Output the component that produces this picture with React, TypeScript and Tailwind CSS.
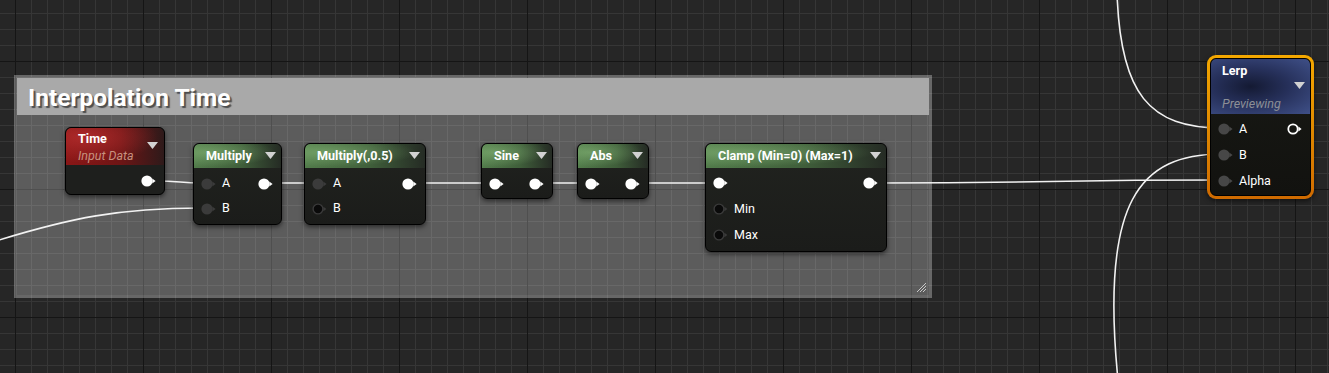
import type { ReactNode } from 'react'

type PinKind = 'out' | 'in' | 'inLight' | 'hollow' | 'ring'

function Pin({ kind }: { kind: PinKind }) {
  if (kind === 'out') {
    return (
      <svg width="15" height="12" viewBox="0 0 15 12" className="shrink-0">
        <circle cx="6" cy="6" r="5.6" fill="#ffffff" />
        <polygon points="11.3,3.6 14.6,6 11.3,8.4" fill="#ffffff" />
      </svg>
    )
  }
  if (kind === 'ring') {
    return (
      <svg width="15" height="12" viewBox="0 0 15 12" className="shrink-0">
        <circle cx="6" cy="6" r="4.7" fill="none" stroke="#ffffff" strokeWidth="1.8" />
        <polygon points="11.4,3.6 14.6,6 11.4,8.4" fill="#ffffff" />
      </svg>
    )
  }
  if (kind === 'hollow') {
    return (
      <svg width="15" height="12" viewBox="0 0 15 12" className="shrink-0">
        <circle cx="6" cy="6" r="4.9" fill="#0a0a0a" stroke="#3a3a3a" strokeWidth="1.4" />
        <polygon points="11.4,3.8 14.4,6 11.4,8.2" fill="#3a3a3a" />
      </svg>
    )
  }
  const c = kind === 'inLight' ? '#474747' : '#3b3b3b'
  return (
    <svg width="15" height="12" viewBox="0 0 15 12" className="shrink-0">
      <circle cx="6" cy="6" r="5.6" fill={c} />
      <polygon points="11.3,3.6 14.6,6 11.3,8.4" fill={c} />
    </svg>
  )
}

function Arrow() {
  return (
    <svg width="11" height="8" viewBox="0 0 11 8" className="shrink-0">
      <polygon points="0,0 11,0 5.5,7" fill="#d2d2d2" />
    </svg>
  )
}

function InRow({ kind, label, h }: { kind: PinKind; label: string; h: string }) {
  return (
    <div className={`flex items-center pl-[7px] ${h}`}>
      <Pin kind={kind} />
      <span className="ml-[6px] text-[12.5px] text-white">{label}</span>
    </div>
  )
}

const greenHead =
  'bg-[radial-gradient(ellipse_at_18%_35%,rgba(140,190,125,0.55),transparent_65%),linear-gradient(to_right,#527c4b,#3f5e3a_55%,#252b24)]'

function GreenNode({ cls, title, children }: { cls: string; title: string; children: ReactNode }) {
  return (
    <div
      className={`absolute rounded-[6px] border border-black bg-[linear-gradient(to_bottom,#21231f,#1b1c1a)] shadow-[0_2px_5px_rgba(0,0,0,0.55)] overflow-hidden ${cls}`}
    >
      <div className={`flex h-[24px] items-center justify-between pl-[12px] pr-[5px] rounded-t-[5px] ${greenHead}`}>
        <span className="text-[12.6px] font-bold text-white whitespace-nowrap">{title}</span>
        <Arrow />
      </div>
      {children}
    </div>
  )
}

export default function App() {
  return (
    <div className="relative h-[373px] w-[1329px] overflow-hidden font-[Roboto,sans-serif] bg-[#262626] bg-[linear-gradient(to_right,#151515_1px,transparent_1px),linear-gradient(to_bottom,#151515_1px,transparent_1px),linear-gradient(to_right,#363636_1px,transparent_1px),linear-gradient(to_bottom,#363636_1px,transparent_1px)] bg-[size:128px_128px,128px_128px,16px_16px,16px_16px] bg-[position:15px_61px,15px_61px,15px_13px,15px_13px]">
      {/* comment box */}
      <div className="absolute left-[14px] top-[75px] h-[223px] w-[918px] border-[3px] border-white/[0.07] bg-white/25">
        <div className="flex h-[37px] items-center bg-[#a9a9a9] pl-[11px] pt-[3px]">
          <span className="text-[24.5px] font-bold text-white [text-shadow:2px_2px_1px_rgba(0,0,0,0.55)]">
            Interpolation Time
          </span>
        </div>
        <svg width="14" height="14" viewBox="0 0 14 14" className="absolute bottom-[1px] right-[1px]">
          <line x1="3" y1="12" x2="12" y2="3" stroke="#c8c8c8" strokeWidth="1" />
          <line x1="6" y1="12" x2="12" y2="6" stroke="#c8c8c8" strokeWidth="1" />
          <line x1="9" y1="12" x2="12" y2="9" stroke="#c8c8c8" strokeWidth="1" />
        </svg>
      </div>

      {/* wires */}
      <svg width="1329" height="373" className="absolute left-0 top-0" fill="none" stroke="#f2f2f2" strokeWidth="1.6">
        <path d="M155 181 C180 181, 180 183, 201 183" />
        <path d="M-4 241 C70 218, 120 208, 201 208" />
        <path d="M272 183 L311 183" />
        <path d="M415 183 L488 183" />
        <path d="M543 183 L584 183" />
        <path d="M639 183 L712 183" />
        <path d="M877 183 C1050 183, 1050 180, 1222 180" />
        <path d="M1117 -8 C1120 95, 1150 128, 1222 128" />
        <path d="M1118 380 C1100 200, 1140 154, 1222 154" />
      </svg>

      {/* Time */}
      <div className="absolute left-[65px] top-[127px] w-[100px] rounded-[6px] border border-black bg-[#1e1f1d] shadow-[0_2px_5px_rgba(0,0,0,0.55)] overflow-hidden">
        <div className="relative h-[37px] rounded-t-[5px] pl-[12px] pt-[3px] bg-[radial-gradient(ellipse_at_20%_25%,rgba(190,50,50,0.7),transparent_65%),linear-gradient(to_right,#8a1616,#6e1515_55%,#2e1a1a)]">
          <div className="text-[12.6px] font-bold leading-[16px] text-white">Time</div>
          <div className="text-[12.5px] italic leading-[17px] text-[#c7917f]">Input Data</div>
          <div className="absolute right-[6px] top-[14px] flex">
            <Arrow />
          </div>
        </div>
        <div className="flex h-[29px] items-center justify-end pr-[8px] pt-[2px]">
          <Pin kind="out" />
        </div>
      </div>

      {/* Multiply */}
      <GreenNode cls="left-[193px] top-[143px] w-[89px]" title="Multiply">
        <div className="pt-[3px] pb-[3px]">
          <div className="flex h-[25px] items-center justify-between pr-[8px]">
            <InRow kind="in" label="A" h="h-[25px]" />
            <Pin kind="out" />
          </div>
          <InRow kind="in" label="B" h="h-[25px]" />
        </div>
      </GreenNode>

      {/* Multiply(,0.5) */}
      <GreenNode cls="left-[304px] top-[143px] w-[122px]" title="Multiply(,0.5)">
        <div className="pt-[3px] pb-[3px]">
          <div className="flex h-[25px] items-center justify-between pr-[8px]">
            <InRow kind="in" label="A" h="h-[25px]" />
            <Pin kind="out" />
          </div>
          <InRow kind="hollow" label="B" h="h-[25px]" />
        </div>
      </GreenNode>

      {/* Sine */}
      <GreenNode cls="left-[481px] top-[143px] w-[72px]" title="Sine">
        <div className="flex h-[30px] items-center justify-between pl-[7px] pr-[8px] pt-[2px]">
          <Pin kind="out" />
          <Pin kind="out" />
        </div>
      </GreenNode>

      {/* Abs */}
      <GreenNode cls="left-[577px] top-[143px] w-[72px]" title="Abs">
        <div className="flex h-[30px] items-center justify-between pl-[7px] pr-[8px] pt-[2px]">
          <Pin kind="out" />
          <Pin kind="out" />
        </div>
      </GreenNode>

      {/* Clamp */}
      <GreenNode cls="left-[705px] top-[143px] w-[182px]" title="Clamp (Min=0) (Max=1)">
        <div className="pt-[2px] pb-[3px]">
          <div className="flex h-[26px] items-center justify-between pl-[7px] pr-[8px]">
            <Pin kind="out" />
            <Pin kind="out" />
          </div>
          <InRow kind="hollow" label="Min" h="h-[26px]" />
          <InRow kind="hollow" label="Max" h="h-[26px]" />
        </div>
      </GreenNode>

      {/* Lerp (selected) */}
      <div className="absolute left-[1207px] top-[55px] h-[144px] w-[107px] rounded-[9px] p-[3px] bg-[linear-gradient(to_bottom,#f4a800,#e08a00_50%,#cf6a00)] shadow-[0_2px_5px_rgba(0,0,0,0.55)]">
        <div className="h-full overflow-hidden rounded-[6px] border border-black bg-[linear-gradient(to_bottom,#181915,#12120f)]">
          <div className="relative h-[55px] rounded-t-[5px] pl-[11px] pt-[4px] bg-[radial-gradient(ellipse_at_40%_50%,#141a33_0%,#26305a_45%,#3f5088_100%)]">
            <div className="text-[12.6px] font-bold leading-[16px] text-white">Lerp</div>
            <div className="absolute right-[5px] top-[23px] flex">
              <Arrow />
            </div>
            <div className="mt-[17px] text-[12.5px] italic leading-[16px] text-[#8c8f96]">Previewing</div>
          </div>
          <div className="pt-[2px]">
            <div className="flex h-[26px] items-center justify-between pr-[8px]">
              <InRow kind="inLight" label="A" h="h-[26px]" />
              <Pin kind="ring" />
            </div>
            <InRow kind="inLight" label="B" h="h-[26px]" />
            <InRow kind="inLight" label="Alpha" h="h-[26px]" />
          </div>
        </div>
      </div>
    </div>
  )
}
